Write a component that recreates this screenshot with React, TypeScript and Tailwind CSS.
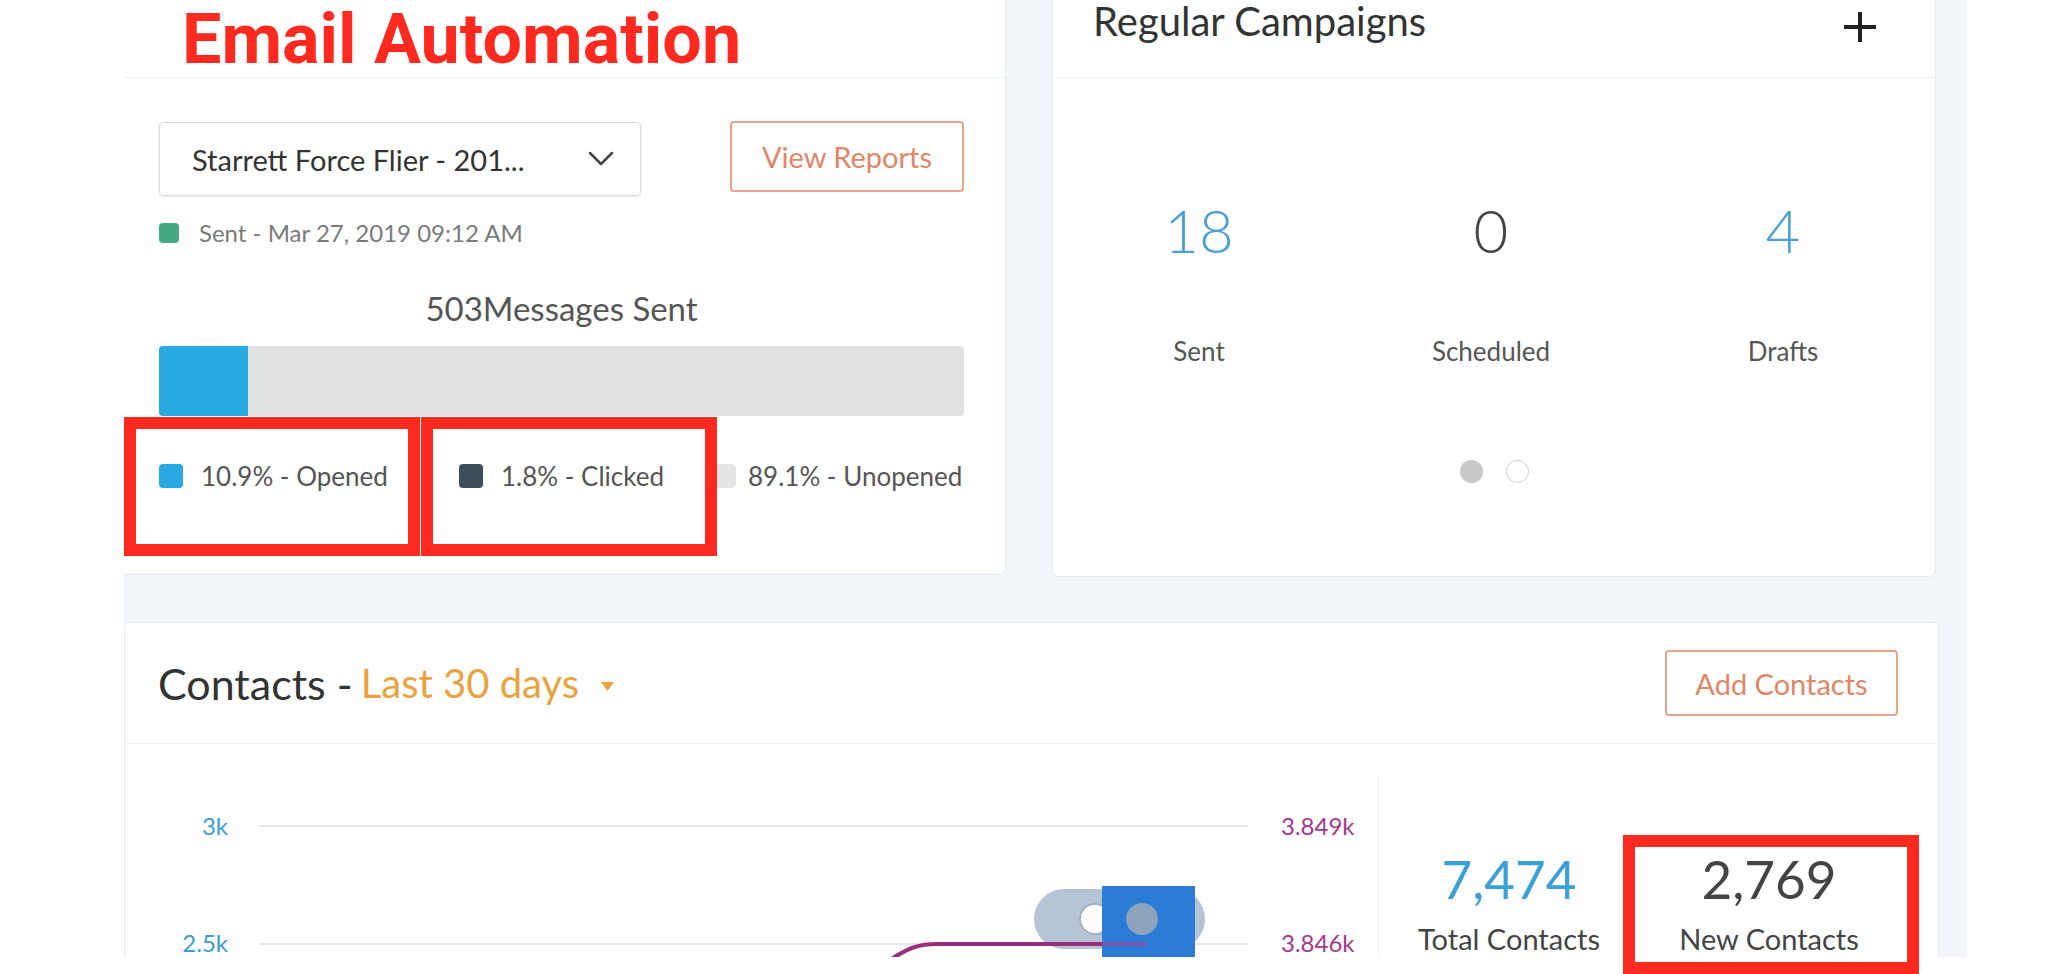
import { useState } from 'react';

const legend = [
  { label: '10.9% - Opened', color: 'bg-[#28a9e1]', width: 'w-[300px]', box: 'w-[24px] h-[24px]', gap: 'ml-[18px]' },
  { label: '1.8% - Clicked', color: 'bg-[#3b4c5b]', width: 'w-[257px]', box: 'w-[24px] h-[24px]', gap: 'ml-[18px]' },
  { label: '89.1% - Unopened', color: 'bg-[#e3e4e6]', width: 'flex-1', box: 'w-[20px] h-[24px]', gap: 'ml-[12px]' },
];

const campaignStats = [
  { value: '18', label: 'Sent', tone: 'text-[#4d9fd3]' },
  { value: '0', label: 'Scheduled', tone: 'text-[#444]' },
  { value: '4', label: 'Drafts', tone: 'text-[#4d9fd3]' },
];

function Chevron() {
  return (
    <svg width="26" height="16" viewBox="0 0 26 16" fill="none" aria-hidden>
      <polyline points="2,2 13,13 24,2" stroke="#444" strokeWidth="2.5" strokeLinecap="round" strokeLinejoin="round" />
    </svg>
  );
}

function Plus() {
  return (
    <svg width="32" height="30" viewBox="0 0 32 30" aria-hidden>
      <rect x="14" y="0" width="4" height="30" fill="#222" />
      <rect x="0" y="13" width="32" height="4" fill="#222" />
    </svg>
  );
}

function EmailCard() {
  const [selected] = useState('Starrett Force Flier - 201...');

  return (
    <div className="w-[882px] h-[575px] bg-white border-r border-b border-[#e6eaef] rounded-br-[6px] flex flex-col">
      <div className="h-[78px] shrink-0 border-b border-[#eceff3] flex items-center pl-[58px]">
        <h1 className="font-['Roboto',sans-serif] font-bold text-[70px] leading-none text-[#ff2a1f]">Email Automation</h1>
      </div>

      <div className="pl-[35px] pr-[41px] pt-[44px]">
        <div className="flex items-start justify-between">
          <div className="w-[482px] h-[74px] border border-[#d6d9dd] rounded-[4px] shadow-[0_1px_2px_rgba(0,0,0,0.08)] flex items-center justify-between pl-[32px] pr-[26px]">
            <span className="text-[29px] leading-none text-[#333]">{selected}</span>
            <Chevron />
          </div>
          <button className="w-[234px] h-[71px] -mt-px border-2 border-[#e6a48f] rounded-[4px] text-[29px] leading-none text-[#e08566]">
            View Reports
          </button>
        </div>

        <div className="mt-[25px] flex items-center">
          <span className="w-[20px] h-[20px] rounded-[4px] bg-[#46a984]" />
          <span className="ml-[20px] text-[24px] leading-none text-[#7a7a7a]">Sent - Mar 27, 2019 09:12 AM</span>
        </div>

        <p className="mt-[47px] text-center text-[33px] leading-none text-[#555]">503Messages Sent</p>

        <div className="mt-[21px] h-[70px] rounded-[4px] bg-[#dfe1e3] overflow-hidden flex">
          <div className="w-[89px] h-full bg-[#28a9e1]" />
        </div>

        <div className="mt-[47px] flex items-center">
          {legend.map((item) => (
            <div key={item.label} className={`${item.width} flex items-center`}>
              <span className={`${item.box} shrink-0 rounded-[4px] ${item.color}`} />
              <span className={`${item.gap} whitespace-nowrap text-[26px] leading-none text-[#555]`}>{item.label}</span>
            </div>
          ))}
        </div>
      </div>
    </div>
  );
}

function CampaignsCard() {
  return (
    <div className="ml-[46px] w-[884px] h-[577px] bg-white border-x border-b border-[#e6eaef] rounded-b-[6px] flex flex-col">
      <div className="h-[78px] shrink-0 border-b border-[#eceff3] flex items-start justify-between pl-[40px] pr-[59px] pt-[1px]">
        <span className="text-[40px] leading-none text-[#333]">Regular Campaigns</span>
        <span className="mt-[11px]">
          <Plus />
        </span>
      </div>

      <div className="mt-[122px] grid grid-cols-[292px_292px_292px]">
        {campaignStats.map((s) => (
          <div key={s.label} className="flex flex-col items-center">
            <span className={`text-[60px] font-light leading-none ${s.tone}`}>{s.value}</span>
            <span className="mt-[78px] text-[26px] leading-none text-[#555]">{s.label}</span>
          </div>
        ))}
      </div>

      <div className="mt-[96px] flex justify-center gap-[23px]">
        <span className="w-[23px] h-[23px] rounded-full bg-[#c8c8c8]" />
        <span className="w-[23px] h-[23px] rounded-full border-[1.5px] border-[#cfcfcf] bg-white" />
      </div>
    </div>
  );
}

function ContactsChart() {
  return (
    <svg width="1253" height="214" viewBox="0 0 1253 214" className="shrink-0 font-['Lato',sans-serif]">
      <line x1="134" y1="82" x2="1123" y2="82" stroke="#e3e5e8" strokeWidth="2" />
      <line x1="134" y1="200" x2="1123" y2="200" stroke="#e3e5e8" strokeWidth="2" />
      <text x="103" y="91" textAnchor="end" fontSize="24" fill="#3d9bd0">3k</text>
      <text x="103" y="208" textAnchor="end" fontSize="24" fill="#3d9bd0">2.5k</text>
      <text x="1156" y="91" fontSize="24" fill="#a3388f">3.849k</text>
      <text x="1156" y="208" fontSize="24" fill="#a3388f">3.846k</text>

      <rect x="909" y="145" width="171" height="60" rx="30" fill="#b4c4d4" />
      <circle cx="970" cy="175" r="15" fill="#fff" stroke="#9aa8b6" strokeWidth="1.5" />
      <path d="M768 214 C784 204 794 200 811 200 L977 200" stroke="#9c2d7c" strokeWidth="4" fill="none" />
      <rect x="977" y="142" width="93" height="72" fill="#2c7bd6" />
      <circle cx="1017" cy="175" r="16" fill="#8da3bb" />
      <path d="M977 200 L1022 200" stroke="#8a4fa8" strokeWidth="4" opacity="0.8" />
    </svg>
  );
}

function ContactsCard() {
  return (
    <div className="mt-[45px] w-[1815px] flex-1 bg-white border border-[#e6eaef] rounded-t-[6px] flex flex-col">
      <div className="h-[121px] shrink-0 border-b border-[#eceff3] flex items-center justify-between pl-[33px] pr-[40px]">
        <div className="flex items-center">
          <span className="text-[43px] leading-none text-[#333]">Contacts -</span>
          <span className="ml-[8px] text-[40px] leading-none text-[#eaa240]">Last 30 days</span>
          <svg width="13" height="9" viewBox="0 0 13 9" className="ml-[22px] mt-[6px]" aria-hidden>
            <polygon points="0,0 13,0 6.5,9" fill="#eaa240" />
          </svg>
        </div>
        <button className="w-[233px] h-[66px] border-2 border-[#e6a48f] rounded-[4px] text-[29px] leading-none text-[#e08566]">
          Add Contacts
        </button>
      </div>

      <div className="flex flex-1">
        <ContactsChart />
        <div className="mt-[32px] flex-1 border-l border-[#eceff3] pt-[76px] grid grid-cols-[260px_260px] content-start">
          <div className="flex flex-col items-center">
            <span className="text-[53px] leading-none text-[#3ba0d6]">7,474</span>
            <span className="mt-[19px] text-[29px] leading-none text-[#444]">Total Contacts</span>
          </div>
          <div className="flex flex-col items-center">
            <span className="text-[53px] leading-none text-[#444]">2,769</span>
            <span className="mt-[19px] text-[29px] leading-none text-[#444]">New Contacts</span>
          </div>
        </div>
      </div>
    </div>
  );
}

function Annotations() {
  return (
    <>
      <div className="absolute left-[124px] top-[417px] w-[296px] h-[139px] border-[12px] border-[#ff2a1f]" />
      <div className="absolute left-[421px] top-[417px] w-[296px] h-[139px] border-[12px] border-[#ff2a1f]" />
      <div className="absolute left-[1623px] top-[835px] w-[296px] h-[139px] border-[12px] border-[#ff2a1f]" />
    </>
  );
}

export default function App() {
  return (
    <div className="relative w-[2048px] h-[974px] overflow-hidden bg-white font-['Lato',sans-serif]">
      <div className="ml-[124px] w-[1843px] h-[957px] bg-[#f2f5f9] flex flex-col overflow-hidden">
        <div className="flex items-start shrink-0">
          <EmailCard />
          <CampaignsCard />
        </div>
        <ContactsCard />
      </div>
      <Annotations />
    </div>
  );
}
